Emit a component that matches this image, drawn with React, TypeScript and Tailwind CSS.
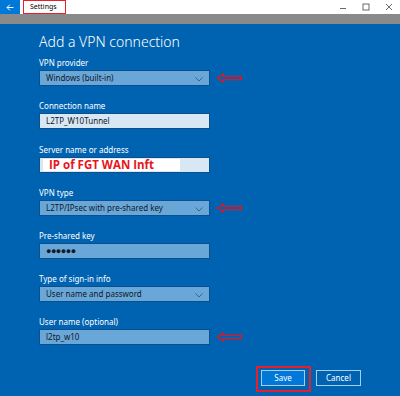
import React from "react";

const font = { fontFamily: '"Noto Sans", "Open Sans", sans-serif' };

function Arrow() {
  return (
    <svg width="27" height="10" viewBox="0 0 27 10" className="ml-[6px]">
      <path d="M1.2 5 L7.5 1 L7.5 3.3 L25.5 3.3 L25.5 6.7 L7.5 6.7 L7.5 9 Z" fill="none" stroke="#e8141c" strokeWidth="1.3" />
    </svg>
  );
}

function Chevron() {
  return (
    <svg width="8" height="5" viewBox="0 0 8 5" className="absolute right-[6px] top-[6px]">
      <path d="M0.5 0.5 L4 4 L7.5 0.5" fill="none" stroke="#2f5f8f" strokeWidth="0.9" />
    </svg>
  );
}

function Label({ children, mt }: { children: React.ReactNode; mt: string }) {
  return <div className={`text-[8px] leading-[10px] h-[10px] text-white ${mt}`}>{children}</div>;
}

function Dropdown({ text, arrow }: { text: string; arrow?: boolean }) {
  return (
    <div className="flex items-center mt-[2px]">
      <div className="relative w-[171px] h-[16px] bg-[#6aa7d9] border border-[#0d4f8c] pl-[6px] text-[8px] leading-[14px] text-[#111827]">
        {text}
        <Chevron />
      </div>
      {arrow && <Arrow />}
    </div>
  );
}

function Input({ children, light, arrow }: { children: React.ReactNode; light?: boolean; arrow?: boolean }) {
  return (
    <div className="flex items-center mt-[2px]">
      <div
        className={`relative w-[171px] h-[16px] border border-[#0d4f8c] pl-[6px] text-[8px] leading-[14px] text-[#111827] ${
          light ? "bg-[#d8e7f4]" : "bg-[#6aa7d9]"
        }`}
      >
        {children}
      </div>
      {arrow && <Arrow />}
    </div>
  );
}

export default function App() {
  return (
    <div className="w-[400px] h-[396px] flex flex-col overflow-hidden" style={font}>
      {/* title bar */}
      <div className="h-[14px] bg-white flex items-stretch">
        <div className="w-[20px] bg-[#0078d7] flex items-center justify-center">
          <svg width="8" height="7" viewBox="0 0 8 7">
            <path d="M7.5 3.5 H1 M3.8 0.7 L1 3.5 L3.8 6.3" fill="none" stroke="white" strokeWidth="1" />
          </svg>
        </div>
        <div className="ml-[3px] w-[43px] border border-[#e3202c] flex items-center pl-[6px] text-[7px] text-black">
          Settings
        </div>
        <div className="flex-1" />
        <div className="flex items-center">
          <svg width="10" height="10" viewBox="0 0 10 10" className="mr-[13px]">
            <path d="M2 6.5 H8" stroke="#444" strokeWidth="0.8" />
          </svg>
          <svg width="10" height="10" viewBox="0 0 10 10" className="mr-[13px]">
            <rect x="2" y="2" width="6" height="6" fill="none" stroke="#444" strokeWidth="0.8" />
          </svg>
          <svg width="10" height="10" viewBox="0 0 10 10" className="mr-[6px]">
            <path d="M2 2 L8 8 M8 2 L2 8" stroke="#444" strokeWidth="0.8" />
          </svg>
        </div>
      </div>
      <div className="h-[10px] bg-[#8a8a8a]" />
      {/* content */}
      <div className="flex-1 bg-[#0063b1] pl-[39px] pt-[10px] flex flex-col">
        <div className="text-[14px] leading-[16px] text-white font-light">Add a VPN connection</div>

        <Label mt="mt-[8px]">VPN provider</Label>
        <Dropdown text="Windows (built-in)" arrow />

        <Label mt="mt-[15px]">Connection name</Label>
        <Input light>L2TP_W10Tunnel</Input>

        <Label mt="mt-[16px]">Server name or address</Label>
        <Input light>
          <div className="absolute left-[3px] top-[1px] w-[137px] h-[12px] bg-white flex items-center pl-[6px]">
            <span className="text-[11.5px] leading-[12px] font-bold text-[#e8141c]" style={{ fontFamily: '"Open Sans", sans-serif' }}>
              IP of FGT WAN Inft
            </span>
          </div>
        </Input>

        <Label mt="mt-[15px]">VPN type</Label>
        <Dropdown text="L2TP/IPsec with pre-shared key" arrow />

        <Label mt="mt-[15px]">Pre-shared key</Label>
        <Input>
          <span className="text-[9px] tracking-[-0.5px] text-[#111827]">●●●●●●</span>
        </Input>

        <Label mt="mt-[15px]">Type of sign-in info</Label>
        <Dropdown text="User name and password" />

        <Label mt="mt-[15px]">User name (optional)</Label>
        <Input arrow>l2tp_w10</Input>

        <div className="flex justify-end pr-[39px] mt-[25px] gap-[11px]">
          <div className="relative">
            <div className="absolute -left-[5px] -top-[4px] -right-[6px] -bottom-[6px] border-2 border-[#e3202c]" />
            <div className="w-[44px] h-[16px] bg-[#0078d7] border border-[#a9cdec] text-white text-[8px] leading-[14px] text-center">
              Save
            </div>
          </div>
          <div className="w-[45px] h-[16px] bg-[#0063b1] border border-[#a9cdec] text-white text-[8px] leading-[14px] text-center">
            Cancel
          </div>
        </div>
      </div>
    </div>
  );
}
